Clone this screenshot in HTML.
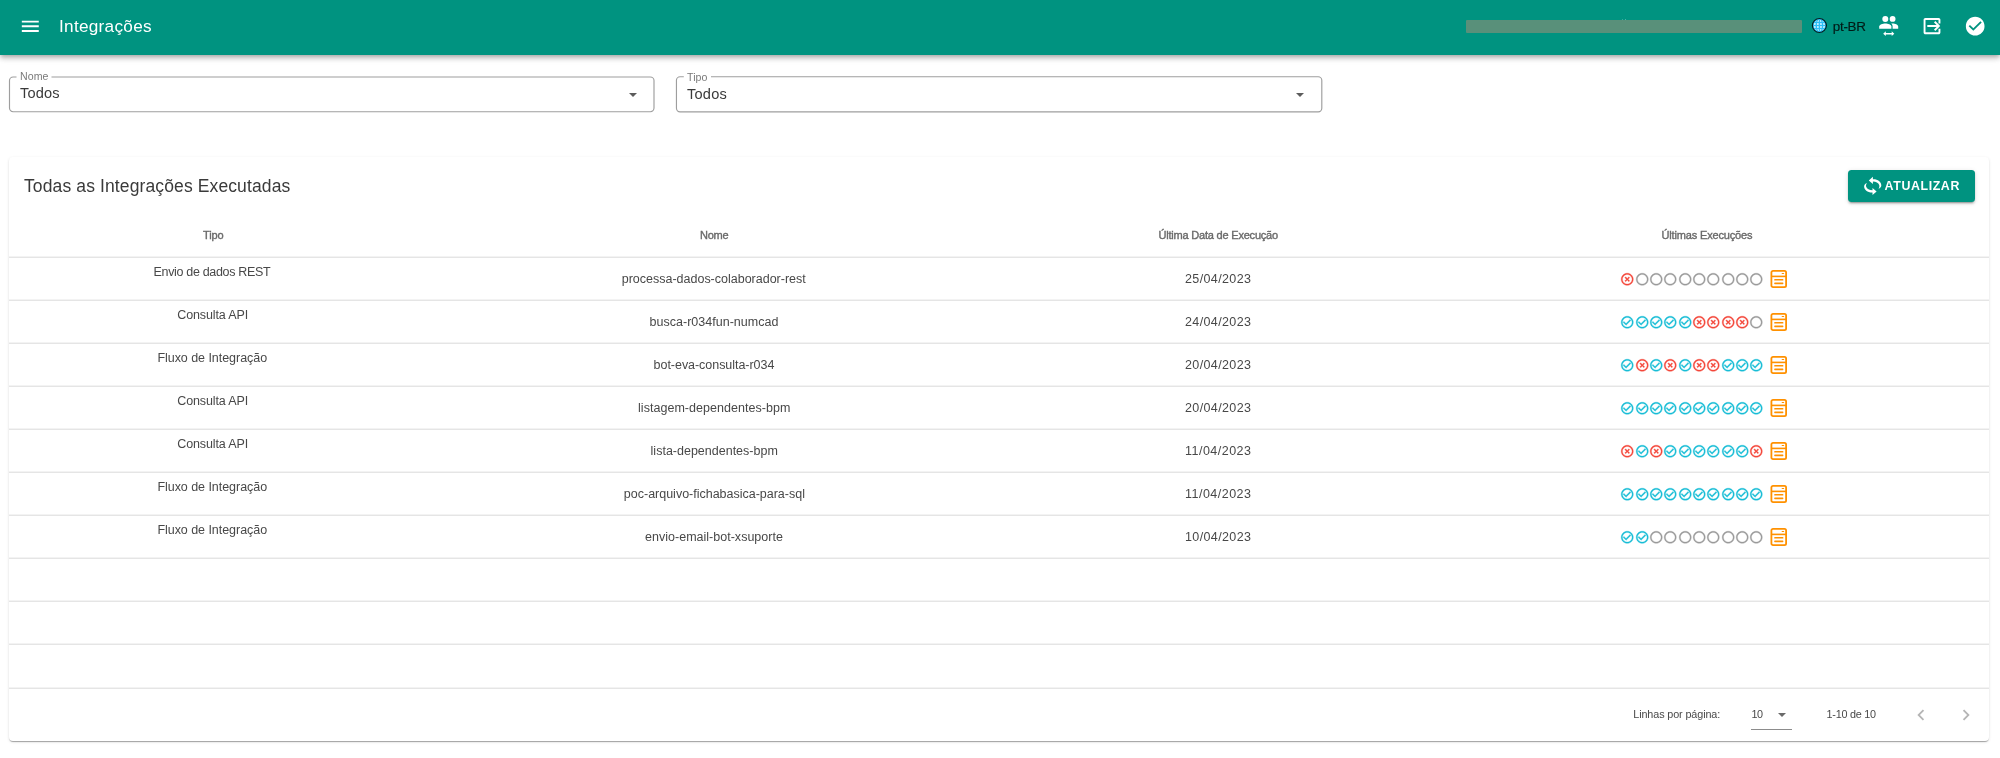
<!DOCTYPE html>
<html lang="pt-BR">
<head>
<meta charset="utf-8">
<title>Integrações</title>
<style>
*{box-sizing:border-box;margin:0;padding:0}
html,body{width:2000px;height:758px;overflow:hidden;background:#fff}
body{font-family:"Liberation Sans",sans-serif;color:#333;position:relative}
svg{position:absolute;overflow:visible}
#root{position:absolute;left:0;top:0;width:2000px;height:758px;will-change:transform}
.t{position:absolute;white-space:nowrap}
.appbar{position:absolute;left:0;top:0;width:2000px;height:55px;background:#009380;box-shadow:0 2px 4px -1px rgba(0,0,0,.2),0 4px 5px 0 rgba(0,0,0,.14),0 1px 9px 0 rgba(0,0,0,.12)}
.redact{position:absolute;left:1466px;top:20px;width:336px;height:13px;background:#59907a;border-radius:1px}
.arr{position:absolute;width:0;height:0;border-left:4.25px solid transparent;border-right:4.25px solid transparent;border-top:4.5px solid #5c5c5c}
.paper{position:absolute;left:9px;top:157px;width:1980px;height:584px;background:#fff;border-radius:4px;box-shadow:0 2px 1px -1px rgba(0,0,0,.2),0 1px 1px 0 rgba(0,0,0,.14),0 1px 3px 0 rgba(0,0,0,.12)}
.btn{position:absolute;left:1848px;top:170px;width:127px;height:32px;background:#009380;border-radius:3.5px;box-shadow:0 3px 1px -2px rgba(0,0,0,.2),0 2px 2px 0 rgba(0,0,0,.14),0 1px 5px 0 rgba(0,0,0,.12)}
.hl{position:absolute;left:9px;width:1980px;height:2px;background:linear-gradient(#f3f3f3 0,#f3f3f3 50%,#e5e5e5 50%,#e5e5e5 100%)}
</style>
</head>
<body>
<div id="root">
<div class="paper"></div>
<svg style="left:0;top:60px" width="1340" height="60" viewBox="0 60 1340 60"><g fill="none" stroke="#9e9e9e" stroke-width="1.15"><rect x="9.5" y="77" width="644.5" height="34.7" rx="3.6"/><rect x="676.45" y="76.75" width="645.35" height="35.05" rx="3.6"/></g><rect x="16.5" y="74" width="35" height="6" fill="#fff"/><rect x="683.8" y="74" width="27.2" height="6" fill="#fff"/></svg>
<div class="arr" style="left:629px;top:92.5px"></div>
<div class="arr" style="left:1296px;top:92.5px"></div>
<div class="btn"></div>
<svg style="left:1855px;top:170px" width="40" height="30" viewBox="0 0 40 30"><g fill="#fff"><path d="M13.8 10.4L17.9 6.8V9.3C22.6 9.1 26.4 11.8 26.3 15.6C26.2 17.3 25 18.4 23.5 18.9C24.3 17.6 24.6 16.2 24.2 15C23.5 12.9 21 11.6 17.9 11.6V13.9Z"/><path d="M21.6 21.4L17.5 25V22.5C12.8 22.7 9 20 9.1 16.2C9.2 14.5 10.4 13.4 11.9 12.9C11.1 14.2 10.8 15.600 11.2 16.8C11.9 18.9 14.4 20.2 17.5 20.2V17.9Z"/></g></svg>
<div class="hl" style="top:256px"></div>
<div class="hl" style="top:299px"></div>
<div class="hl" style="top:342px"></div>
<div class="hl" style="top:385px"></div>
<div class="hl" style="top:428px"></div>
<div class="hl" style="top:471px"></div>
<div class="hl" style="top:514px"></div>
<div class="hl" style="top:557px"></div>
<div class="hl" style="top:600px"></div>
<div class="hl" style="top:643px"></div>
<div class="hl" style="top:687px"></div>
<svg style="left:1620.25px;top:271.75px" width="14.5" height="14.5" viewBox="0 0 24 24"><path fill="#f4473a" stroke="#f4473a" stroke-width=".55" d="M14.59 8L12 10.59 9.41 8 8 9.41 10.59 12 8 14.59 9.41 16 12 13.41 14.59 16 16 14.59 13.41 12 16 9.41 14.59 8zM12 2C6.47 2 2 6.47 2 12s4.47 10 10 10 10-4.47 10-10S17.53 2 12 2zm0 18c-4.41 0-8-3.59-8-8s3.59-8 8-8 8 3.59 8 8-3.59 8-8 8z"/></svg>
<svg style="left:1634.61px;top:271.75px" width="14.5" height="14.5" viewBox="0 0 24 24"><path fill="#9a9a9a" stroke="#9a9a9a" stroke-width=".55" d="M12 2C6.48 2 2 6.48 2 12s4.48 10 10 10 10-4.48 10-10S17.52 2 12 2zm0 18c-4.42 0-8-3.58-8-8s3.58-8 8-8 8 3.58 8 8-3.58 8-8 8z"/></svg>
<svg style="left:1648.97px;top:271.75px" width="14.5" height="14.5" viewBox="0 0 24 24"><path fill="#9a9a9a" stroke="#9a9a9a" stroke-width=".55" d="M12 2C6.48 2 2 6.48 2 12s4.48 10 10 10 10-4.48 10-10S17.52 2 12 2zm0 18c-4.42 0-8-3.58-8-8s3.58-8 8-8 8 3.58 8 8-3.58 8-8 8z"/></svg>
<svg style="left:1663.33px;top:271.75px" width="14.5" height="14.5" viewBox="0 0 24 24"><path fill="#9a9a9a" stroke="#9a9a9a" stroke-width=".55" d="M12 2C6.48 2 2 6.48 2 12s4.48 10 10 10 10-4.48 10-10S17.52 2 12 2zm0 18c-4.42 0-8-3.58-8-8s3.58-8 8-8 8 3.58 8 8-3.58 8-8 8z"/></svg>
<svg style="left:1677.69px;top:271.75px" width="14.5" height="14.5" viewBox="0 0 24 24"><path fill="#9a9a9a" stroke="#9a9a9a" stroke-width=".55" d="M12 2C6.48 2 2 6.48 2 12s4.48 10 10 10 10-4.48 10-10S17.52 2 12 2zm0 18c-4.42 0-8-3.58-8-8s3.58-8 8-8 8 3.58 8 8-3.58 8-8 8z"/></svg>
<svg style="left:1692.05px;top:271.75px" width="14.5" height="14.5" viewBox="0 0 24 24"><path fill="#9a9a9a" stroke="#9a9a9a" stroke-width=".55" d="M12 2C6.48 2 2 6.48 2 12s4.48 10 10 10 10-4.48 10-10S17.52 2 12 2zm0 18c-4.42 0-8-3.58-8-8s3.58-8 8-8 8 3.58 8 8-3.58 8-8 8z"/></svg>
<svg style="left:1706.41px;top:271.75px" width="14.5" height="14.5" viewBox="0 0 24 24"><path fill="#9a9a9a" stroke="#9a9a9a" stroke-width=".55" d="M12 2C6.48 2 2 6.48 2 12s4.48 10 10 10 10-4.48 10-10S17.52 2 12 2zm0 18c-4.42 0-8-3.58-8-8s3.58-8 8-8 8 3.58 8 8-3.58 8-8 8z"/></svg>
<svg style="left:1720.77px;top:271.75px" width="14.5" height="14.5" viewBox="0 0 24 24"><path fill="#9a9a9a" stroke="#9a9a9a" stroke-width=".55" d="M12 2C6.48 2 2 6.48 2 12s4.48 10 10 10 10-4.48 10-10S17.52 2 12 2zm0 18c-4.42 0-8-3.58-8-8s3.58-8 8-8 8 3.58 8 8-3.58 8-8 8z"/></svg>
<svg style="left:1735.13px;top:271.75px" width="14.5" height="14.5" viewBox="0 0 24 24"><path fill="#9a9a9a" stroke="#9a9a9a" stroke-width=".55" d="M12 2C6.48 2 2 6.48 2 12s4.48 10 10 10 10-4.48 10-10S17.52 2 12 2zm0 18c-4.42 0-8-3.58-8-8s3.58-8 8-8 8 3.58 8 8-3.58 8-8 8z"/></svg>
<svg style="left:1749.49px;top:271.75px" width="14.5" height="14.5" viewBox="0 0 24 24"><path fill="#9a9a9a" stroke="#9a9a9a" stroke-width=".55" d="M12 2C6.48 2 2 6.48 2 12s4.48 10 10 10 10-4.48 10-10S17.52 2 12 2zm0 18c-4.42 0-8-3.58-8-8s3.58-8 8-8 8 3.58 8 8-3.58 8-8 8z"/></svg>
<svg style="left:1770px;top:269px" width="18" height="20" viewBox="0 0 18 20"><rect x="1.4" y="1.9" width="14.7" height="16.3" rx="1.6" fill="none" stroke="#ff9100" stroke-width="1.8"/><rect x="1.4" y="6.6" width="14.7" height="1.6" fill="#ff9100"/><rect x="4.2" y="10" width="9.2" height="1.6" rx=".6" fill="#ff9100"/><rect x="4.2" y="13.6" width="9.2" height="1.6" rx=".6" fill="#ff9100"/><rect x="11.6" y="4" width="2.6" height="1" rx=".5" fill="#ff9100"/></svg>
<svg style="left:1620.25px;top:314.75px" width="14.5" height="14.5" viewBox="0 0 24 24"><path fill="#17bdd6" stroke="#17bdd6" stroke-width=".55" d="M16.59 7.58L10 14.17l-3.59-3.58L5 12l5 5 8-8zM12 2C6.48 2 2 6.48 2 12s4.48 10 10 10 10-4.48 10-10S17.52 2 12 2zm0 18c-4.41 0-8-3.59-8-8s3.59-8 8-8 8 3.59 8 8-3.59 8-8 8z"/></svg>
<svg style="left:1634.61px;top:314.75px" width="14.5" height="14.5" viewBox="0 0 24 24"><path fill="#17bdd6" stroke="#17bdd6" stroke-width=".55" d="M16.59 7.58L10 14.17l-3.59-3.58L5 12l5 5 8-8zM12 2C6.48 2 2 6.48 2 12s4.48 10 10 10 10-4.48 10-10S17.52 2 12 2zm0 18c-4.41 0-8-3.59-8-8s3.59-8 8-8 8 3.59 8 8-3.59 8-8 8z"/></svg>
<svg style="left:1648.97px;top:314.75px" width="14.5" height="14.5" viewBox="0 0 24 24"><path fill="#17bdd6" stroke="#17bdd6" stroke-width=".55" d="M16.59 7.58L10 14.17l-3.59-3.58L5 12l5 5 8-8zM12 2C6.48 2 2 6.48 2 12s4.48 10 10 10 10-4.48 10-10S17.52 2 12 2zm0 18c-4.41 0-8-3.59-8-8s3.59-8 8-8 8 3.59 8 8-3.59 8-8 8z"/></svg>
<svg style="left:1663.33px;top:314.75px" width="14.5" height="14.5" viewBox="0 0 24 24"><path fill="#17bdd6" stroke="#17bdd6" stroke-width=".55" d="M16.59 7.58L10 14.17l-3.59-3.58L5 12l5 5 8-8zM12 2C6.48 2 2 6.48 2 12s4.48 10 10 10 10-4.48 10-10S17.52 2 12 2zm0 18c-4.41 0-8-3.59-8-8s3.59-8 8-8 8 3.59 8 8-3.59 8-8 8z"/></svg>
<svg style="left:1677.69px;top:314.75px" width="14.5" height="14.5" viewBox="0 0 24 24"><path fill="#17bdd6" stroke="#17bdd6" stroke-width=".55" d="M16.59 7.58L10 14.17l-3.59-3.58L5 12l5 5 8-8zM12 2C6.48 2 2 6.48 2 12s4.48 10 10 10 10-4.48 10-10S17.52 2 12 2zm0 18c-4.41 0-8-3.59-8-8s3.59-8 8-8 8 3.59 8 8-3.59 8-8 8z"/></svg>
<svg style="left:1692.05px;top:314.75px" width="14.5" height="14.5" viewBox="0 0 24 24"><path fill="#f4473a" stroke="#f4473a" stroke-width=".55" d="M14.59 8L12 10.59 9.41 8 8 9.41 10.59 12 8 14.59 9.41 16 12 13.41 14.59 16 16 14.59 13.41 12 16 9.41 14.59 8zM12 2C6.47 2 2 6.47 2 12s4.47 10 10 10 10-4.47 10-10S17.53 2 12 2zm0 18c-4.41 0-8-3.59-8-8s3.59-8 8-8 8 3.59 8 8-3.59 8-8 8z"/></svg>
<svg style="left:1706.41px;top:314.75px" width="14.5" height="14.5" viewBox="0 0 24 24"><path fill="#f4473a" stroke="#f4473a" stroke-width=".55" d="M14.59 8L12 10.59 9.41 8 8 9.41 10.59 12 8 14.59 9.41 16 12 13.41 14.59 16 16 14.59 13.41 12 16 9.41 14.59 8zM12 2C6.47 2 2 6.47 2 12s4.47 10 10 10 10-4.47 10-10S17.53 2 12 2zm0 18c-4.41 0-8-3.59-8-8s3.59-8 8-8 8 3.59 8 8-3.59 8-8 8z"/></svg>
<svg style="left:1720.77px;top:314.75px" width="14.5" height="14.5" viewBox="0 0 24 24"><path fill="#f4473a" stroke="#f4473a" stroke-width=".55" d="M14.59 8L12 10.59 9.41 8 8 9.41 10.59 12 8 14.59 9.41 16 12 13.41 14.59 16 16 14.59 13.41 12 16 9.41 14.59 8zM12 2C6.47 2 2 6.47 2 12s4.47 10 10 10 10-4.47 10-10S17.53 2 12 2zm0 18c-4.41 0-8-3.59-8-8s3.59-8 8-8 8 3.59 8 8-3.59 8-8 8z"/></svg>
<svg style="left:1735.13px;top:314.75px" width="14.5" height="14.5" viewBox="0 0 24 24"><path fill="#f4473a" stroke="#f4473a" stroke-width=".55" d="M14.59 8L12 10.59 9.41 8 8 9.41 10.59 12 8 14.59 9.41 16 12 13.41 14.59 16 16 14.59 13.41 12 16 9.41 14.59 8zM12 2C6.47 2 2 6.47 2 12s4.47 10 10 10 10-4.47 10-10S17.53 2 12 2zm0 18c-4.41 0-8-3.59-8-8s3.59-8 8-8 8 3.59 8 8-3.59 8-8 8z"/></svg>
<svg style="left:1749.49px;top:314.75px" width="14.5" height="14.5" viewBox="0 0 24 24"><path fill="#9a9a9a" stroke="#9a9a9a" stroke-width=".55" d="M12 2C6.48 2 2 6.48 2 12s4.48 10 10 10 10-4.48 10-10S17.52 2 12 2zm0 18c-4.42 0-8-3.58-8-8s3.58-8 8-8 8 3.58 8 8-3.58 8-8 8z"/></svg>
<svg style="left:1770px;top:312px" width="18" height="20" viewBox="0 0 18 20"><rect x="1.4" y="1.9" width="14.7" height="16.3" rx="1.6" fill="none" stroke="#ff9100" stroke-width="1.8"/><rect x="1.4" y="6.6" width="14.7" height="1.6" fill="#ff9100"/><rect x="4.2" y="10" width="9.2" height="1.6" rx=".6" fill="#ff9100"/><rect x="4.2" y="13.6" width="9.2" height="1.6" rx=".6" fill="#ff9100"/><rect x="11.6" y="4" width="2.6" height="1" rx=".5" fill="#ff9100"/></svg>
<svg style="left:1620.25px;top:357.75px" width="14.5" height="14.5" viewBox="0 0 24 24"><path fill="#17bdd6" stroke="#17bdd6" stroke-width=".55" d="M16.59 7.58L10 14.17l-3.59-3.58L5 12l5 5 8-8zM12 2C6.48 2 2 6.48 2 12s4.48 10 10 10 10-4.48 10-10S17.52 2 12 2zm0 18c-4.41 0-8-3.59-8-8s3.59-8 8-8 8 3.59 8 8-3.59 8-8 8z"/></svg>
<svg style="left:1634.61px;top:357.75px" width="14.5" height="14.5" viewBox="0 0 24 24"><path fill="#f4473a" stroke="#f4473a" stroke-width=".55" d="M14.59 8L12 10.59 9.41 8 8 9.41 10.59 12 8 14.59 9.41 16 12 13.41 14.59 16 16 14.59 13.41 12 16 9.41 14.59 8zM12 2C6.47 2 2 6.47 2 12s4.47 10 10 10 10-4.47 10-10S17.53 2 12 2zm0 18c-4.41 0-8-3.59-8-8s3.59-8 8-8 8 3.59 8 8-3.59 8-8 8z"/></svg>
<svg style="left:1648.97px;top:357.75px" width="14.5" height="14.5" viewBox="0 0 24 24"><path fill="#17bdd6" stroke="#17bdd6" stroke-width=".55" d="M16.59 7.58L10 14.17l-3.59-3.58L5 12l5 5 8-8zM12 2C6.48 2 2 6.48 2 12s4.48 10 10 10 10-4.48 10-10S17.52 2 12 2zm0 18c-4.41 0-8-3.59-8-8s3.59-8 8-8 8 3.59 8 8-3.59 8-8 8z"/></svg>
<svg style="left:1663.33px;top:357.75px" width="14.5" height="14.5" viewBox="0 0 24 24"><path fill="#f4473a" stroke="#f4473a" stroke-width=".55" d="M14.59 8L12 10.59 9.41 8 8 9.41 10.59 12 8 14.59 9.41 16 12 13.41 14.59 16 16 14.59 13.41 12 16 9.41 14.59 8zM12 2C6.47 2 2 6.47 2 12s4.47 10 10 10 10-4.47 10-10S17.53 2 12 2zm0 18c-4.41 0-8-3.59-8-8s3.59-8 8-8 8 3.59 8 8-3.59 8-8 8z"/></svg>
<svg style="left:1677.69px;top:357.75px" width="14.5" height="14.5" viewBox="0 0 24 24"><path fill="#17bdd6" stroke="#17bdd6" stroke-width=".55" d="M16.59 7.58L10 14.17l-3.59-3.58L5 12l5 5 8-8zM12 2C6.48 2 2 6.48 2 12s4.48 10 10 10 10-4.48 10-10S17.52 2 12 2zm0 18c-4.41 0-8-3.59-8-8s3.59-8 8-8 8 3.59 8 8-3.59 8-8 8z"/></svg>
<svg style="left:1692.05px;top:357.75px" width="14.5" height="14.5" viewBox="0 0 24 24"><path fill="#f4473a" stroke="#f4473a" stroke-width=".55" d="M14.59 8L12 10.59 9.41 8 8 9.41 10.59 12 8 14.59 9.41 16 12 13.41 14.59 16 16 14.59 13.41 12 16 9.41 14.59 8zM12 2C6.47 2 2 6.47 2 12s4.47 10 10 10 10-4.47 10-10S17.53 2 12 2zm0 18c-4.41 0-8-3.59-8-8s3.59-8 8-8 8 3.59 8 8-3.59 8-8 8z"/></svg>
<svg style="left:1706.41px;top:357.75px" width="14.5" height="14.5" viewBox="0 0 24 24"><path fill="#f4473a" stroke="#f4473a" stroke-width=".55" d="M14.59 8L12 10.59 9.41 8 8 9.41 10.59 12 8 14.59 9.41 16 12 13.41 14.59 16 16 14.59 13.41 12 16 9.41 14.59 8zM12 2C6.47 2 2 6.47 2 12s4.47 10 10 10 10-4.47 10-10S17.53 2 12 2zm0 18c-4.41 0-8-3.59-8-8s3.59-8 8-8 8 3.59 8 8-3.59 8-8 8z"/></svg>
<svg style="left:1720.77px;top:357.75px" width="14.5" height="14.5" viewBox="0 0 24 24"><path fill="#17bdd6" stroke="#17bdd6" stroke-width=".55" d="M16.59 7.58L10 14.17l-3.59-3.58L5 12l5 5 8-8zM12 2C6.48 2 2 6.48 2 12s4.48 10 10 10 10-4.48 10-10S17.52 2 12 2zm0 18c-4.41 0-8-3.59-8-8s3.59-8 8-8 8 3.59 8 8-3.59 8-8 8z"/></svg>
<svg style="left:1735.13px;top:357.75px" width="14.5" height="14.5" viewBox="0 0 24 24"><path fill="#17bdd6" stroke="#17bdd6" stroke-width=".55" d="M16.59 7.58L10 14.17l-3.59-3.58L5 12l5 5 8-8zM12 2C6.48 2 2 6.48 2 12s4.48 10 10 10 10-4.48 10-10S17.52 2 12 2zm0 18c-4.41 0-8-3.59-8-8s3.59-8 8-8 8 3.59 8 8-3.59 8-8 8z"/></svg>
<svg style="left:1749.49px;top:357.75px" width="14.5" height="14.5" viewBox="0 0 24 24"><path fill="#17bdd6" stroke="#17bdd6" stroke-width=".55" d="M16.59 7.58L10 14.17l-3.59-3.58L5 12l5 5 8-8zM12 2C6.48 2 2 6.48 2 12s4.48 10 10 10 10-4.48 10-10S17.52 2 12 2zm0 18c-4.41 0-8-3.59-8-8s3.59-8 8-8 8 3.59 8 8-3.59 8-8 8z"/></svg>
<svg style="left:1770px;top:355px" width="18" height="20" viewBox="0 0 18 20"><rect x="1.4" y="1.9" width="14.7" height="16.3" rx="1.6" fill="none" stroke="#ff9100" stroke-width="1.8"/><rect x="1.4" y="6.6" width="14.7" height="1.6" fill="#ff9100"/><rect x="4.2" y="10" width="9.2" height="1.6" rx=".6" fill="#ff9100"/><rect x="4.2" y="13.6" width="9.2" height="1.6" rx=".6" fill="#ff9100"/><rect x="11.6" y="4" width="2.6" height="1" rx=".5" fill="#ff9100"/></svg>
<svg style="left:1620.25px;top:400.75px" width="14.5" height="14.5" viewBox="0 0 24 24"><path fill="#17bdd6" stroke="#17bdd6" stroke-width=".55" d="M16.59 7.58L10 14.17l-3.59-3.58L5 12l5 5 8-8zM12 2C6.48 2 2 6.48 2 12s4.48 10 10 10 10-4.48 10-10S17.52 2 12 2zm0 18c-4.41 0-8-3.59-8-8s3.59-8 8-8 8 3.59 8 8-3.59 8-8 8z"/></svg>
<svg style="left:1634.61px;top:400.75px" width="14.5" height="14.5" viewBox="0 0 24 24"><path fill="#17bdd6" stroke="#17bdd6" stroke-width=".55" d="M16.59 7.58L10 14.17l-3.59-3.58L5 12l5 5 8-8zM12 2C6.48 2 2 6.48 2 12s4.48 10 10 10 10-4.48 10-10S17.52 2 12 2zm0 18c-4.41 0-8-3.59-8-8s3.59-8 8-8 8 3.59 8 8-3.59 8-8 8z"/></svg>
<svg style="left:1648.97px;top:400.75px" width="14.5" height="14.5" viewBox="0 0 24 24"><path fill="#17bdd6" stroke="#17bdd6" stroke-width=".55" d="M16.59 7.58L10 14.17l-3.59-3.58L5 12l5 5 8-8zM12 2C6.48 2 2 6.48 2 12s4.48 10 10 10 10-4.48 10-10S17.52 2 12 2zm0 18c-4.41 0-8-3.59-8-8s3.59-8 8-8 8 3.59 8 8-3.59 8-8 8z"/></svg>
<svg style="left:1663.33px;top:400.75px" width="14.5" height="14.5" viewBox="0 0 24 24"><path fill="#17bdd6" stroke="#17bdd6" stroke-width=".55" d="M16.59 7.58L10 14.17l-3.59-3.58L5 12l5 5 8-8zM12 2C6.48 2 2 6.48 2 12s4.48 10 10 10 10-4.48 10-10S17.52 2 12 2zm0 18c-4.41 0-8-3.59-8-8s3.59-8 8-8 8 3.59 8 8-3.59 8-8 8z"/></svg>
<svg style="left:1677.69px;top:400.75px" width="14.5" height="14.5" viewBox="0 0 24 24"><path fill="#17bdd6" stroke="#17bdd6" stroke-width=".55" d="M16.59 7.58L10 14.17l-3.59-3.58L5 12l5 5 8-8zM12 2C6.48 2 2 6.48 2 12s4.48 10 10 10 10-4.48 10-10S17.52 2 12 2zm0 18c-4.41 0-8-3.59-8-8s3.59-8 8-8 8 3.59 8 8-3.59 8-8 8z"/></svg>
<svg style="left:1692.05px;top:400.75px" width="14.5" height="14.5" viewBox="0 0 24 24"><path fill="#17bdd6" stroke="#17bdd6" stroke-width=".55" d="M16.59 7.58L10 14.17l-3.59-3.58L5 12l5 5 8-8zM12 2C6.48 2 2 6.48 2 12s4.48 10 10 10 10-4.48 10-10S17.52 2 12 2zm0 18c-4.41 0-8-3.59-8-8s3.59-8 8-8 8 3.59 8 8-3.59 8-8 8z"/></svg>
<svg style="left:1706.41px;top:400.75px" width="14.5" height="14.5" viewBox="0 0 24 24"><path fill="#17bdd6" stroke="#17bdd6" stroke-width=".55" d="M16.59 7.58L10 14.17l-3.59-3.58L5 12l5 5 8-8zM12 2C6.48 2 2 6.48 2 12s4.48 10 10 10 10-4.48 10-10S17.52 2 12 2zm0 18c-4.41 0-8-3.59-8-8s3.59-8 8-8 8 3.59 8 8-3.59 8-8 8z"/></svg>
<svg style="left:1720.77px;top:400.75px" width="14.5" height="14.5" viewBox="0 0 24 24"><path fill="#17bdd6" stroke="#17bdd6" stroke-width=".55" d="M16.59 7.58L10 14.17l-3.59-3.58L5 12l5 5 8-8zM12 2C6.48 2 2 6.48 2 12s4.48 10 10 10 10-4.48 10-10S17.52 2 12 2zm0 18c-4.41 0-8-3.59-8-8s3.59-8 8-8 8 3.59 8 8-3.59 8-8 8z"/></svg>
<svg style="left:1735.13px;top:400.75px" width="14.5" height="14.5" viewBox="0 0 24 24"><path fill="#17bdd6" stroke="#17bdd6" stroke-width=".55" d="M16.59 7.58L10 14.17l-3.59-3.58L5 12l5 5 8-8zM12 2C6.48 2 2 6.48 2 12s4.48 10 10 10 10-4.48 10-10S17.52 2 12 2zm0 18c-4.41 0-8-3.59-8-8s3.59-8 8-8 8 3.59 8 8-3.59 8-8 8z"/></svg>
<svg style="left:1749.49px;top:400.75px" width="14.5" height="14.5" viewBox="0 0 24 24"><path fill="#17bdd6" stroke="#17bdd6" stroke-width=".55" d="M16.59 7.58L10 14.17l-3.59-3.58L5 12l5 5 8-8zM12 2C6.48 2 2 6.48 2 12s4.48 10 10 10 10-4.48 10-10S17.52 2 12 2zm0 18c-4.41 0-8-3.59-8-8s3.59-8 8-8 8 3.59 8 8-3.59 8-8 8z"/></svg>
<svg style="left:1770px;top:398px" width="18" height="20" viewBox="0 0 18 20"><rect x="1.4" y="1.9" width="14.7" height="16.3" rx="1.6" fill="none" stroke="#ff9100" stroke-width="1.8"/><rect x="1.4" y="6.6" width="14.7" height="1.6" fill="#ff9100"/><rect x="4.2" y="10" width="9.2" height="1.6" rx=".6" fill="#ff9100"/><rect x="4.2" y="13.6" width="9.2" height="1.6" rx=".6" fill="#ff9100"/><rect x="11.6" y="4" width="2.6" height="1" rx=".5" fill="#ff9100"/></svg>
<svg style="left:1620.25px;top:443.75px" width="14.5" height="14.5" viewBox="0 0 24 24"><path fill="#f4473a" stroke="#f4473a" stroke-width=".55" d="M14.59 8L12 10.59 9.41 8 8 9.41 10.59 12 8 14.59 9.41 16 12 13.41 14.59 16 16 14.59 13.41 12 16 9.41 14.59 8zM12 2C6.47 2 2 6.47 2 12s4.47 10 10 10 10-4.47 10-10S17.53 2 12 2zm0 18c-4.41 0-8-3.59-8-8s3.59-8 8-8 8 3.59 8 8-3.59 8-8 8z"/></svg>
<svg style="left:1634.61px;top:443.75px" width="14.5" height="14.5" viewBox="0 0 24 24"><path fill="#17bdd6" stroke="#17bdd6" stroke-width=".55" d="M16.59 7.58L10 14.17l-3.59-3.58L5 12l5 5 8-8zM12 2C6.48 2 2 6.48 2 12s4.48 10 10 10 10-4.48 10-10S17.52 2 12 2zm0 18c-4.41 0-8-3.59-8-8s3.59-8 8-8 8 3.59 8 8-3.59 8-8 8z"/></svg>
<svg style="left:1648.97px;top:443.75px" width="14.5" height="14.5" viewBox="0 0 24 24"><path fill="#f4473a" stroke="#f4473a" stroke-width=".55" d="M14.59 8L12 10.59 9.41 8 8 9.41 10.59 12 8 14.59 9.41 16 12 13.41 14.59 16 16 14.59 13.41 12 16 9.41 14.59 8zM12 2C6.47 2 2 6.47 2 12s4.47 10 10 10 10-4.47 10-10S17.53 2 12 2zm0 18c-4.41 0-8-3.59-8-8s3.59-8 8-8 8 3.59 8 8-3.59 8-8 8z"/></svg>
<svg style="left:1663.33px;top:443.75px" width="14.5" height="14.5" viewBox="0 0 24 24"><path fill="#17bdd6" stroke="#17bdd6" stroke-width=".55" d="M16.59 7.58L10 14.17l-3.59-3.58L5 12l5 5 8-8zM12 2C6.48 2 2 6.48 2 12s4.48 10 10 10 10-4.48 10-10S17.52 2 12 2zm0 18c-4.41 0-8-3.59-8-8s3.59-8 8-8 8 3.59 8 8-3.59 8-8 8z"/></svg>
<svg style="left:1677.69px;top:443.75px" width="14.5" height="14.5" viewBox="0 0 24 24"><path fill="#17bdd6" stroke="#17bdd6" stroke-width=".55" d="M16.59 7.58L10 14.17l-3.59-3.58L5 12l5 5 8-8zM12 2C6.48 2 2 6.48 2 12s4.48 10 10 10 10-4.48 10-10S17.52 2 12 2zm0 18c-4.41 0-8-3.59-8-8s3.59-8 8-8 8 3.59 8 8-3.59 8-8 8z"/></svg>
<svg style="left:1692.05px;top:443.75px" width="14.5" height="14.5" viewBox="0 0 24 24"><path fill="#17bdd6" stroke="#17bdd6" stroke-width=".55" d="M16.59 7.58L10 14.17l-3.59-3.58L5 12l5 5 8-8zM12 2C6.48 2 2 6.48 2 12s4.48 10 10 10 10-4.48 10-10S17.52 2 12 2zm0 18c-4.41 0-8-3.59-8-8s3.59-8 8-8 8 3.59 8 8-3.59 8-8 8z"/></svg>
<svg style="left:1706.41px;top:443.75px" width="14.5" height="14.5" viewBox="0 0 24 24"><path fill="#17bdd6" stroke="#17bdd6" stroke-width=".55" d="M16.59 7.58L10 14.17l-3.59-3.58L5 12l5 5 8-8zM12 2C6.48 2 2 6.48 2 12s4.48 10 10 10 10-4.48 10-10S17.52 2 12 2zm0 18c-4.41 0-8-3.59-8-8s3.59-8 8-8 8 3.59 8 8-3.59 8-8 8z"/></svg>
<svg style="left:1720.77px;top:443.75px" width="14.5" height="14.5" viewBox="0 0 24 24"><path fill="#17bdd6" stroke="#17bdd6" stroke-width=".55" d="M16.59 7.58L10 14.17l-3.59-3.58L5 12l5 5 8-8zM12 2C6.48 2 2 6.48 2 12s4.48 10 10 10 10-4.48 10-10S17.52 2 12 2zm0 18c-4.41 0-8-3.59-8-8s3.59-8 8-8 8 3.59 8 8-3.59 8-8 8z"/></svg>
<svg style="left:1735.13px;top:443.75px" width="14.5" height="14.5" viewBox="0 0 24 24"><path fill="#17bdd6" stroke="#17bdd6" stroke-width=".55" d="M16.59 7.58L10 14.17l-3.59-3.58L5 12l5 5 8-8zM12 2C6.48 2 2 6.48 2 12s4.48 10 10 10 10-4.48 10-10S17.52 2 12 2zm0 18c-4.41 0-8-3.59-8-8s3.59-8 8-8 8 3.59 8 8-3.59 8-8 8z"/></svg>
<svg style="left:1749.49px;top:443.75px" width="14.5" height="14.5" viewBox="0 0 24 24"><path fill="#f4473a" stroke="#f4473a" stroke-width=".55" d="M14.59 8L12 10.59 9.41 8 8 9.41 10.59 12 8 14.59 9.41 16 12 13.41 14.59 16 16 14.59 13.41 12 16 9.41 14.59 8zM12 2C6.47 2 2 6.47 2 12s4.47 10 10 10 10-4.47 10-10S17.53 2 12 2zm0 18c-4.41 0-8-3.59-8-8s3.59-8 8-8 8 3.59 8 8-3.59 8-8 8z"/></svg>
<svg style="left:1770px;top:441px" width="18" height="20" viewBox="0 0 18 20"><rect x="1.4" y="1.9" width="14.7" height="16.3" rx="1.6" fill="none" stroke="#ff9100" stroke-width="1.8"/><rect x="1.4" y="6.6" width="14.7" height="1.6" fill="#ff9100"/><rect x="4.2" y="10" width="9.2" height="1.6" rx=".6" fill="#ff9100"/><rect x="4.2" y="13.6" width="9.2" height="1.6" rx=".6" fill="#ff9100"/><rect x="11.6" y="4" width="2.6" height="1" rx=".5" fill="#ff9100"/></svg>
<svg style="left:1620.25px;top:486.75px" width="14.5" height="14.5" viewBox="0 0 24 24"><path fill="#17bdd6" stroke="#17bdd6" stroke-width=".55" d="M16.59 7.58L10 14.17l-3.59-3.58L5 12l5 5 8-8zM12 2C6.48 2 2 6.48 2 12s4.48 10 10 10 10-4.48 10-10S17.52 2 12 2zm0 18c-4.41 0-8-3.59-8-8s3.59-8 8-8 8 3.59 8 8-3.59 8-8 8z"/></svg>
<svg style="left:1634.61px;top:486.75px" width="14.5" height="14.5" viewBox="0 0 24 24"><path fill="#17bdd6" stroke="#17bdd6" stroke-width=".55" d="M16.59 7.58L10 14.17l-3.59-3.58L5 12l5 5 8-8zM12 2C6.48 2 2 6.48 2 12s4.48 10 10 10 10-4.48 10-10S17.52 2 12 2zm0 18c-4.41 0-8-3.59-8-8s3.59-8 8-8 8 3.59 8 8-3.59 8-8 8z"/></svg>
<svg style="left:1648.97px;top:486.75px" width="14.5" height="14.5" viewBox="0 0 24 24"><path fill="#17bdd6" stroke="#17bdd6" stroke-width=".55" d="M16.59 7.58L10 14.17l-3.59-3.58L5 12l5 5 8-8zM12 2C6.48 2 2 6.48 2 12s4.48 10 10 10 10-4.48 10-10S17.52 2 12 2zm0 18c-4.41 0-8-3.59-8-8s3.59-8 8-8 8 3.59 8 8-3.59 8-8 8z"/></svg>
<svg style="left:1663.33px;top:486.75px" width="14.5" height="14.5" viewBox="0 0 24 24"><path fill="#17bdd6" stroke="#17bdd6" stroke-width=".55" d="M16.59 7.58L10 14.17l-3.59-3.58L5 12l5 5 8-8zM12 2C6.48 2 2 6.48 2 12s4.48 10 10 10 10-4.48 10-10S17.52 2 12 2zm0 18c-4.41 0-8-3.59-8-8s3.59-8 8-8 8 3.59 8 8-3.59 8-8 8z"/></svg>
<svg style="left:1677.69px;top:486.75px" width="14.5" height="14.5" viewBox="0 0 24 24"><path fill="#17bdd6" stroke="#17bdd6" stroke-width=".55" d="M16.59 7.58L10 14.17l-3.59-3.58L5 12l5 5 8-8zM12 2C6.48 2 2 6.48 2 12s4.48 10 10 10 10-4.48 10-10S17.52 2 12 2zm0 18c-4.41 0-8-3.59-8-8s3.59-8 8-8 8 3.59 8 8-3.59 8-8 8z"/></svg>
<svg style="left:1692.05px;top:486.75px" width="14.5" height="14.5" viewBox="0 0 24 24"><path fill="#17bdd6" stroke="#17bdd6" stroke-width=".55" d="M16.59 7.58L10 14.17l-3.59-3.58L5 12l5 5 8-8zM12 2C6.48 2 2 6.48 2 12s4.48 10 10 10 10-4.48 10-10S17.52 2 12 2zm0 18c-4.41 0-8-3.59-8-8s3.59-8 8-8 8 3.59 8 8-3.59 8-8 8z"/></svg>
<svg style="left:1706.41px;top:486.75px" width="14.5" height="14.5" viewBox="0 0 24 24"><path fill="#17bdd6" stroke="#17bdd6" stroke-width=".55" d="M16.59 7.58L10 14.17l-3.59-3.58L5 12l5 5 8-8zM12 2C6.48 2 2 6.48 2 12s4.48 10 10 10 10-4.48 10-10S17.52 2 12 2zm0 18c-4.41 0-8-3.59-8-8s3.59-8 8-8 8 3.59 8 8-3.59 8-8 8z"/></svg>
<svg style="left:1720.77px;top:486.75px" width="14.5" height="14.5" viewBox="0 0 24 24"><path fill="#17bdd6" stroke="#17bdd6" stroke-width=".55" d="M16.59 7.58L10 14.17l-3.59-3.58L5 12l5 5 8-8zM12 2C6.48 2 2 6.48 2 12s4.48 10 10 10 10-4.48 10-10S17.52 2 12 2zm0 18c-4.41 0-8-3.59-8-8s3.59-8 8-8 8 3.59 8 8-3.59 8-8 8z"/></svg>
<svg style="left:1735.13px;top:486.75px" width="14.5" height="14.5" viewBox="0 0 24 24"><path fill="#17bdd6" stroke="#17bdd6" stroke-width=".55" d="M16.59 7.58L10 14.17l-3.59-3.58L5 12l5 5 8-8zM12 2C6.48 2 2 6.48 2 12s4.48 10 10 10 10-4.48 10-10S17.52 2 12 2zm0 18c-4.41 0-8-3.59-8-8s3.59-8 8-8 8 3.59 8 8-3.59 8-8 8z"/></svg>
<svg style="left:1749.49px;top:486.75px" width="14.5" height="14.5" viewBox="0 0 24 24"><path fill="#17bdd6" stroke="#17bdd6" stroke-width=".55" d="M16.59 7.58L10 14.17l-3.59-3.58L5 12l5 5 8-8zM12 2C6.48 2 2 6.48 2 12s4.48 10 10 10 10-4.48 10-10S17.52 2 12 2zm0 18c-4.41 0-8-3.59-8-8s3.59-8 8-8 8 3.59 8 8-3.59 8-8 8z"/></svg>
<svg style="left:1770px;top:484px" width="18" height="20" viewBox="0 0 18 20"><rect x="1.4" y="1.9" width="14.7" height="16.3" rx="1.6" fill="none" stroke="#ff9100" stroke-width="1.8"/><rect x="1.4" y="6.6" width="14.7" height="1.6" fill="#ff9100"/><rect x="4.2" y="10" width="9.2" height="1.6" rx=".6" fill="#ff9100"/><rect x="4.2" y="13.6" width="9.2" height="1.6" rx=".6" fill="#ff9100"/><rect x="11.6" y="4" width="2.6" height="1" rx=".5" fill="#ff9100"/></svg>
<svg style="left:1620.25px;top:529.75px" width="14.5" height="14.5" viewBox="0 0 24 24"><path fill="#17bdd6" stroke="#17bdd6" stroke-width=".55" d="M16.59 7.58L10 14.17l-3.59-3.58L5 12l5 5 8-8zM12 2C6.48 2 2 6.48 2 12s4.48 10 10 10 10-4.48 10-10S17.52 2 12 2zm0 18c-4.41 0-8-3.59-8-8s3.59-8 8-8 8 3.59 8 8-3.59 8-8 8z"/></svg>
<svg style="left:1634.61px;top:529.75px" width="14.5" height="14.5" viewBox="0 0 24 24"><path fill="#17bdd6" stroke="#17bdd6" stroke-width=".55" d="M16.59 7.58L10 14.17l-3.59-3.58L5 12l5 5 8-8zM12 2C6.48 2 2 6.48 2 12s4.48 10 10 10 10-4.48 10-10S17.52 2 12 2zm0 18c-4.41 0-8-3.59-8-8s3.59-8 8-8 8 3.59 8 8-3.59 8-8 8z"/></svg>
<svg style="left:1648.97px;top:529.75px" width="14.5" height="14.5" viewBox="0 0 24 24"><path fill="#9a9a9a" stroke="#9a9a9a" stroke-width=".55" d="M12 2C6.48 2 2 6.48 2 12s4.48 10 10 10 10-4.48 10-10S17.52 2 12 2zm0 18c-4.42 0-8-3.58-8-8s3.58-8 8-8 8 3.58 8 8-3.58 8-8 8z"/></svg>
<svg style="left:1663.33px;top:529.75px" width="14.5" height="14.5" viewBox="0 0 24 24"><path fill="#9a9a9a" stroke="#9a9a9a" stroke-width=".55" d="M12 2C6.48 2 2 6.48 2 12s4.48 10 10 10 10-4.48 10-10S17.52 2 12 2zm0 18c-4.42 0-8-3.58-8-8s3.58-8 8-8 8 3.58 8 8-3.58 8-8 8z"/></svg>
<svg style="left:1677.69px;top:529.75px" width="14.5" height="14.5" viewBox="0 0 24 24"><path fill="#9a9a9a" stroke="#9a9a9a" stroke-width=".55" d="M12 2C6.48 2 2 6.48 2 12s4.48 10 10 10 10-4.48 10-10S17.52 2 12 2zm0 18c-4.42 0-8-3.58-8-8s3.58-8 8-8 8 3.58 8 8-3.58 8-8 8z"/></svg>
<svg style="left:1692.05px;top:529.75px" width="14.5" height="14.5" viewBox="0 0 24 24"><path fill="#9a9a9a" stroke="#9a9a9a" stroke-width=".55" d="M12 2C6.48 2 2 6.48 2 12s4.48 10 10 10 10-4.48 10-10S17.52 2 12 2zm0 18c-4.42 0-8-3.58-8-8s3.58-8 8-8 8 3.58 8 8-3.58 8-8 8z"/></svg>
<svg style="left:1706.41px;top:529.75px" width="14.5" height="14.5" viewBox="0 0 24 24"><path fill="#9a9a9a" stroke="#9a9a9a" stroke-width=".55" d="M12 2C6.48 2 2 6.48 2 12s4.48 10 10 10 10-4.48 10-10S17.52 2 12 2zm0 18c-4.42 0-8-3.58-8-8s3.58-8 8-8 8 3.58 8 8-3.58 8-8 8z"/></svg>
<svg style="left:1720.77px;top:529.75px" width="14.5" height="14.5" viewBox="0 0 24 24"><path fill="#9a9a9a" stroke="#9a9a9a" stroke-width=".55" d="M12 2C6.48 2 2 6.48 2 12s4.48 10 10 10 10-4.48 10-10S17.52 2 12 2zm0 18c-4.42 0-8-3.58-8-8s3.58-8 8-8 8 3.58 8 8-3.58 8-8 8z"/></svg>
<svg style="left:1735.13px;top:529.75px" width="14.5" height="14.5" viewBox="0 0 24 24"><path fill="#9a9a9a" stroke="#9a9a9a" stroke-width=".55" d="M12 2C6.48 2 2 6.48 2 12s4.48 10 10 10 10-4.48 10-10S17.52 2 12 2zm0 18c-4.42 0-8-3.58-8-8s3.58-8 8-8 8 3.58 8 8-3.58 8-8 8z"/></svg>
<svg style="left:1749.49px;top:529.75px" width="14.5" height="14.5" viewBox="0 0 24 24"><path fill="#9a9a9a" stroke="#9a9a9a" stroke-width=".55" d="M12 2C6.48 2 2 6.48 2 12s4.48 10 10 10 10-4.48 10-10S17.52 2 12 2zm0 18c-4.42 0-8-3.58-8-8s3.58-8 8-8 8 3.58 8 8-3.58 8-8 8z"/></svg>
<svg style="left:1770px;top:527px" width="18" height="20" viewBox="0 0 18 20"><rect x="1.4" y="1.9" width="14.7" height="16.3" rx="1.6" fill="none" stroke="#ff9100" stroke-width="1.8"/><rect x="1.4" y="6.6" width="14.7" height="1.6" fill="#ff9100"/><rect x="4.2" y="10" width="9.2" height="1.6" rx=".6" fill="#ff9100"/><rect x="4.2" y="13.6" width="9.2" height="1.6" rx=".6" fill="#ff9100"/><rect x="11.6" y="4" width="2.6" height="1" rx=".5" fill="#ff9100"/></svg>
<div class="arr" style="left:1777.5px;top:713px;border-left-width:4px;border-right-width:4px;border-top-width:4px;border-top-color:#6a6a6a"></div>
<div style="position:absolute;left:1751px;top:729px;width:41px;height:1px;background:#8c8c8c"></div>
<svg style="left:1910px;top:704px" width="22" height="22" viewBox="0 0 24 24"><path fill="#b5b5b5" d="M15.41 16.59L10.83 12l4.58-4.59L14 6l-6 6 6 6 1.41-1.41z"/></svg>
<svg style="left:1955px;top:704px" width="22" height="22" viewBox="0 0 24 24"><path fill="#b5b5b5" d="M8.59 16.59L13.17 12 8.59 7.41 10 6l6 6-6 6-1.41-1.41z"/></svg>
<div class="appbar">
<svg style="left:19.3px;top:14.8px" width="22.6" height="22.6" viewBox="0 0 24 24"><path fill="#fff" d="M3 18h18v-2H3v2zm0-5h18v-2H3v2zm0-7v2h18V6H3z"/></svg>
<div class="redact"></div>
<div style="position:absolute;left:1622px;top:19px;width:1px;height:1px;background:rgba(255,255,255,.22)"></div><div style="position:absolute;left:1625px;top:19px;width:1px;height:1px;background:rgba(255,255,255,.3)"></div>
<svg style="left:1811px;top:17px" width="17" height="17" viewBox="0 0 17 17"><circle cx="8.4" cy="8.5" r="6.6" fill="#f4fcff"/><g stroke="#2cbff6" stroke-width="1.45" fill="none"><path d="M8.4 1.800v13.4M1.8 8.5h13.2M2.600 5.500h11.6M2.600 11.500h11.600"/><ellipse cx="8.4" cy="8.5" rx="3.2" ry="6.4"/></g><circle cx="8.4" cy="8.5" r="6.500" fill="none" stroke="#2cbff6" stroke-width="1.6"/><circle cx="8.4" cy="8.5" r="7" fill="none" stroke="#031a17" stroke-width="1.2"/></svg>
<svg style="left:1877px;top:13px" width="24" height="26" viewBox="0 0 24 26"><g fill="#fff"><circle cx="8.3" cy="5.9" r="3"/><circle cx="15.6" cy="5.9" r="2.9"/><path d="M2.2 15.8v-2.2c0-2.2 3.6-3.2 6.1-3.2s6.1 1 6.1 3.2v2.2z"/><path d="M15.6 15.8v-2.4c0-1.2-.6-2.1-1.5-2.8 .5-.1 1-.2 1.5-.2 2.4 0 5.6 1 5.6 3.2v2.2z"/><path d="M6.2 20.7l2.6-2.4v1.7h5.9v-1.7l2.6 2.4-2.6 2.4v-1.7H8.8v1.7z"/></g></svg>
<svg style="left:1920px;top:14px" width="24" height="24" viewBox="0 0 24 24"><g fill="#fff"><path d="M5.4 4C4.4 4 3.6 4.8 3.6 5.8v12.6c0 1 .8 1.8 1.8 1.8h13.2c1 0 1.8-.8 1.8-1.8v-3.6h-1.9v3.5H5.5V5.9h13v3.5h1.9V5.8c0-1-.8-1.8-1.8-1.8z"/><path d="M15.3 7.100l-1.300 1.300 2.600 2.600H7.300v2h9.300l-2.600 2.600 1.300 1.300 4.900-4.900z"/></g></svg>
<svg style="left:1963.9px;top:14.8px" width="22.4" height="22.4" viewBox="0 0 24 24"><path fill="#fff" d="M12 2C6.48 2 2 6.48 2 12s4.48 10 10 10 10-4.480 10-10S17.52 2 12 2zm-2 15l-5-5 1.41-1.41L10 14.17l7.59-7.59L19 8l-9 9z"/></svg>
</div>
<div class="t" style="left:59.00px;top:16.00px;font-size:17.2px;line-height:20px;letter-spacing:0.278px;color:#fff;">Integrações</div>
<div class="t" style="left:1832.80px;top:19.00px;font-size:13.4px;line-height:15px;letter-spacing:-0.290px;color:#001a16;-webkit-text-stroke:.15px #001a16">pt-BR</div>
<div class="t" style="left:20.00px;top:70.00px;font-size:10.6px;line-height:12px;letter-spacing:0.044px;color:#7a7a7a;">Nome</div>
<div class="t" style="left:20.00px;top:85.00px;font-size:14.6px;line-height:16px;letter-spacing:0.139px;color:#3a3a3a;">Todos</div>
<div class="t" style="left:687.00px;top:71.00px;font-size:10.6px;line-height:12px;letter-spacing:0.059px;color:#7a7a7a;">Tipo</div>
<div class="t" style="left:687.00px;top:86.00px;font-size:14.6px;line-height:16px;letter-spacing:0.214px;color:#3a3a3a;">Todos</div>
<div class="t" style="left:24.00px;top:176.00px;font-size:17.5px;line-height:20px;letter-spacing:0.120px;color:#3a3a3a;">Todas as Integrações Executadas</div>
<div class="t" style="left:1884.60px;top:179.00px;font-size:12.4px;line-height:14px;letter-spacing:0.597px;font-weight:bold;color:#fff;">ATUALIZAR</div>
<div class="t" style="left:203.00px;top:229.00px;font-size:11px;line-height:12px;letter-spacing:-0.124px;color:#6a6a6a;-webkit-text-stroke:.38px #6a6a6a">Tipo</div>
<div class="t" style="left:700.00px;top:229.00px;font-size:11px;line-height:12px;letter-spacing:-0.242px;color:#6a6a6a;-webkit-text-stroke:.38px #6a6a6a">Nome</div>
<div class="t" style="left:1158.50px;top:229.00px;font-size:11px;line-height:12px;letter-spacing:-0.204px;color:#6a6a6a;-webkit-text-stroke:.38px #6a6a6a">Última Data de Execução</div>
<div class="t" style="left:1661.50px;top:229.00px;font-size:11px;line-height:12px;letter-spacing:-0.158px;color:#6a6a6a;-webkit-text-stroke:.38px #6a6a6a">Últimas Execuções</div>
<div class="t" style="left:153.55px;top:265.00px;font-size:12.5px;line-height:14px;letter-spacing:-0.325px;color:#484848;">Envio de dados REST</div>
<div class="t" style="left:621.75px;top:272.00px;font-size:12.5px;line-height:14px;letter-spacing:-0.005px;color:#484848;">processa-dados-colaborador-rest</div>
<div class="t" style="left:1185.00px;top:272.00px;font-size:12.5px;line-height:14px;letter-spacing:0.377px;color:#484848;">25/04/2023</div>
<div class="t" style="left:177.25px;top:308.00px;font-size:12.5px;line-height:14px;letter-spacing:-0.126px;color:#484848;">Consulta API</div>
<div class="t" style="left:649.60px;top:315.00px;font-size:12.5px;line-height:14px;letter-spacing:0.011px;color:#484848;">busca-r034fun-numcad</div>
<div class="t" style="left:1185.00px;top:315.00px;font-size:12.5px;line-height:14px;letter-spacing:0.377px;color:#484848;">24/04/2023</div>
<div class="t" style="left:157.40px;top:351.00px;font-size:12.5px;line-height:14px;letter-spacing:-0.041px;color:#484848;">Fluxo de Integração</div>
<div class="t" style="left:653.60px;top:358.00px;font-size:12.5px;line-height:14px;letter-spacing:-0.042px;color:#484848;">bot-eva-consulta-r034</div>
<div class="t" style="left:1185.00px;top:358.00px;font-size:12.5px;line-height:14px;letter-spacing:0.377px;color:#484848;">20/04/2023</div>
<div class="t" style="left:177.25px;top:394.00px;font-size:12.5px;line-height:14px;letter-spacing:-0.126px;color:#484848;">Consulta API</div>
<div class="t" style="left:638.00px;top:401.00px;font-size:12.5px;line-height:14px;letter-spacing:0.041px;color:#484848;">listagem-dependentes-bpm</div>
<div class="t" style="left:1185.00px;top:401.00px;font-size:12.5px;line-height:14px;letter-spacing:0.377px;color:#484848;">20/04/2023</div>
<div class="t" style="left:177.25px;top:437.00px;font-size:12.5px;line-height:14px;letter-spacing:-0.126px;color:#484848;">Consulta API</div>
<div class="t" style="left:650.60px;top:444.00px;font-size:12.5px;line-height:14px;letter-spacing:0.003px;color:#484848;">lista-dependentes-bpm</div>
<div class="t" style="left:1185.00px;top:444.00px;font-size:12.5px;line-height:14px;letter-spacing:0.480px;color:#484848;">11/04/2023</div>
<div class="t" style="left:157.40px;top:480.00px;font-size:12.5px;line-height:14px;letter-spacing:-0.041px;color:#484848;">Fluxo de Integração</div>
<div class="t" style="left:623.85px;top:487.00px;font-size:12.5px;line-height:14px;letter-spacing:-0.008px;color:#484848;">poc-arquivo-fichabasica-para-sql</div>
<div class="t" style="left:1185.00px;top:487.00px;font-size:12.5px;line-height:14px;letter-spacing:0.480px;color:#484848;">11/04/2023</div>
<div class="t" style="left:157.40px;top:523.00px;font-size:12.5px;line-height:14px;letter-spacing:-0.041px;color:#484848;">Fluxo de Integração</div>
<div class="t" style="left:645.05px;top:530.00px;font-size:12.5px;line-height:14px;letter-spacing:0.013px;color:#484848;">envio-email-bot-xsuporte</div>
<div class="t" style="left:1185.00px;top:530.00px;font-size:12.5px;line-height:14px;letter-spacing:0.377px;color:#484848;">10/04/2023</div>
<div class="t" style="left:1633.30px;top:708.00px;font-size:10.8px;line-height:12px;letter-spacing:-0.114px;color:#484848;">Linhas por página:</div>
<div class="t" style="left:1751.50px;top:708.00px;font-size:10.8px;line-height:12px;letter-spacing:-0.505px;color:#484848;">10</div>
<div class="t" style="left:1826.50px;top:708.00px;font-size:10.8px;line-height:12px;letter-spacing:-0.236px;color:#484848;">1-10 de 10</div>
</div>
</body>
</html>
